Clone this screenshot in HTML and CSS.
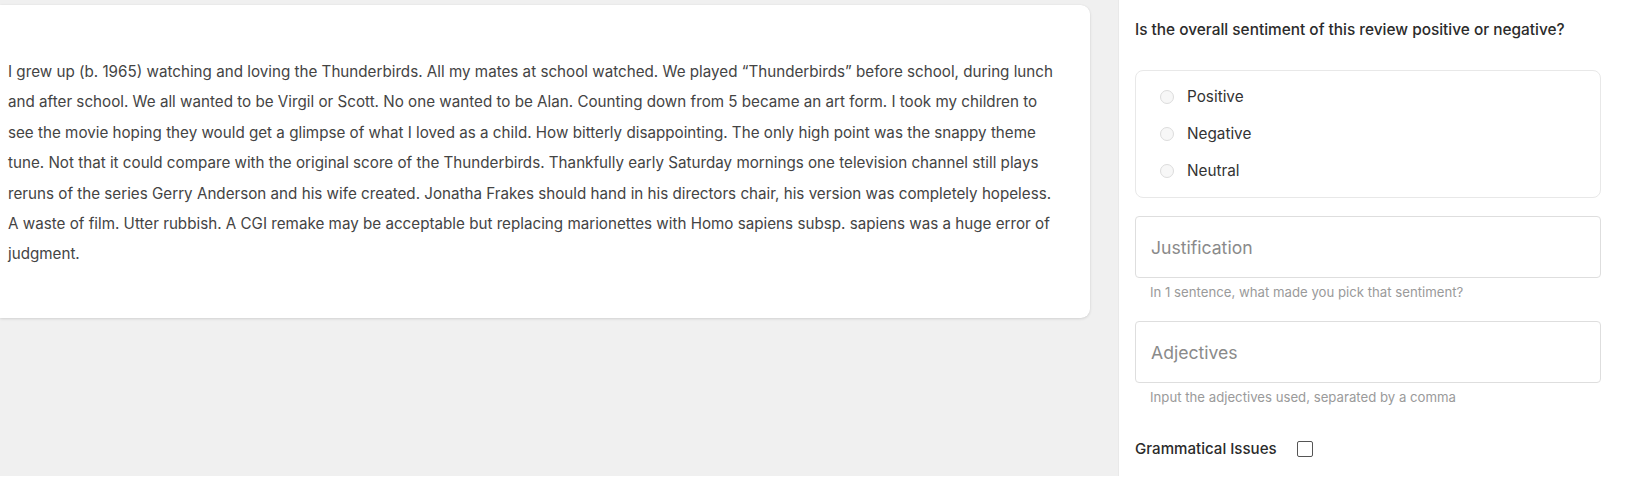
FILE: index.html
```html
<!DOCTYPE html>
<html>
<head>
<meta charset="utf-8">
<link rel="stylesheet" href="styles.css">
</head>
<body>
<div class="page">
  <main class="main">
    <div class="card">
      <p class="review">I grew up (b. 1965) watching and loving the Thunderbirds. All my mates at school watched. We played “Thunderbirds” before school, during lunch and after school. We all wanted to be Virgil or Scott. No one wanted to be Alan. Counting down from 5 became an art form. I took my children to see the movie hoping they would get a glimpse of what I loved as a child. How bitterly disappointing. The only high point was the snappy theme tune. Not that it could compare with the original score of the Thunderbirds. Thankfully early Saturday mornings one television channel still plays reruns of the series Gerry Anderson and his wife created. Jonatha Frakes should hand in his directors chair, his version was completely hopeless. A waste of film. Utter rubbish. A CGI remake may be acceptable but replacing marionettes with Homo sapiens subsp. sapiens was a huge error of judgment.</p>
    </div>
  </main>
  <aside class="side">
    <div class="question">Is the overall sentiment of this review positive or negative?</div>
    <div class="radios">
      <label class="radio"><span class="dot"></span><span>Positive</span></label>
      <label class="radio"><span class="dot"></span><span>Negative</span></label>
      <label class="radio"><span class="dot"></span><span>Neutral</span></label>
    </div>
    <div class="field">
      <div class="input">Justification</div>
      <div class="help">In 1 sentence, what made you pick that sentiment?</div>
    </div>
    <div class="field">
      <div class="input">Adjectives</div>
      <div class="help">Input the adjectives used, separated by a comma</div>
    </div>
    <div class="check">
      <span>Grammatical Issues</span>
      <span class="box"></span>
    </div>
  </aside>
</div>
</body>
</html>
```
FILE: styles.css
```css
* { box-sizing: border-box; }
html, body { margin: 0; padding: 0; background: #ffffff; }
body {
  font-family: Inter, "Noto Sans", sans-serif;
  color: #333;
  width: 1632px;
  height: 482px;
  overflow: hidden;
}
.page {
  display: flex;
  height: 476px;
}
.main {
  flex: 1;
  background: #f0f0f0;
  padding-top: 5px;
  padding-right: 28px;
  border-right: 1px solid #e9e9e9;
}
.card {
  background: #fff;
  border-radius: 0 9px 9px 0;
  box-shadow: 0 1px 3px rgba(0,0,0,0.12), 0 0 1px rgba(0,0,0,0.08);
  height: 313px;
  padding: 52px 30px 0 8px;
}
.review {
  margin: 0;
  max-width: 1064px;
  font-size: 15.2px;
  line-height: 30.4px;
  color: #444;
}
.side {
  width: 513px;
  background: #fff;
  padding: 20px 31px 0 16px;
}
.question {
  font-size: 15.4px;
  font-weight: 500;
  line-height: 20px;
  color: #2b2b2b;
}
.radios {
  margin-top: 30px;
  border: 1px solid #e8e8e8;
  border-radius: 8px;
  padding: 16px 0 16px 24px;
  display: flex;
  flex-direction: column;
  gap: 17px;
}
.radio {
  display: flex;
  align-items: center;
  gap: 13px;
  font-size: 15.3px;
  line-height: 20px;
  color: #333;
}
.dot {
  width: 14px;
  height: 14px;
  border-radius: 50%;
  border: 1px solid #dcdcdc;
  background: #f7f7f7;
}
.field { margin-top: 18px; }
.field + .field { margin-top: 21px; }
.input {
  height: 62px;
  border: 1px solid #dedede;
  border-radius: 4px;
  padding: 0 15px;
  display: flex;
  align-items: center;
  font-size: 17.6px;
  color: #8a8a8a;
}
.help {
  margin-top: 6px;
  padding-left: 15px;
  font-size: 13.2px;
  line-height: 16px;
  color: #9a9a9a;
}
.check {
  margin-top: 34px;
  display: flex;
  align-items: center;
  gap: 20px;
  font-size: 15.1px;
  font-weight: 500;
  line-height: 20px;
  color: #2b2b2b;
}
.box {
  width: 16px;
  height: 16px;
  border: 1.5px solid #555;
  border-radius: 2px;
}
```
